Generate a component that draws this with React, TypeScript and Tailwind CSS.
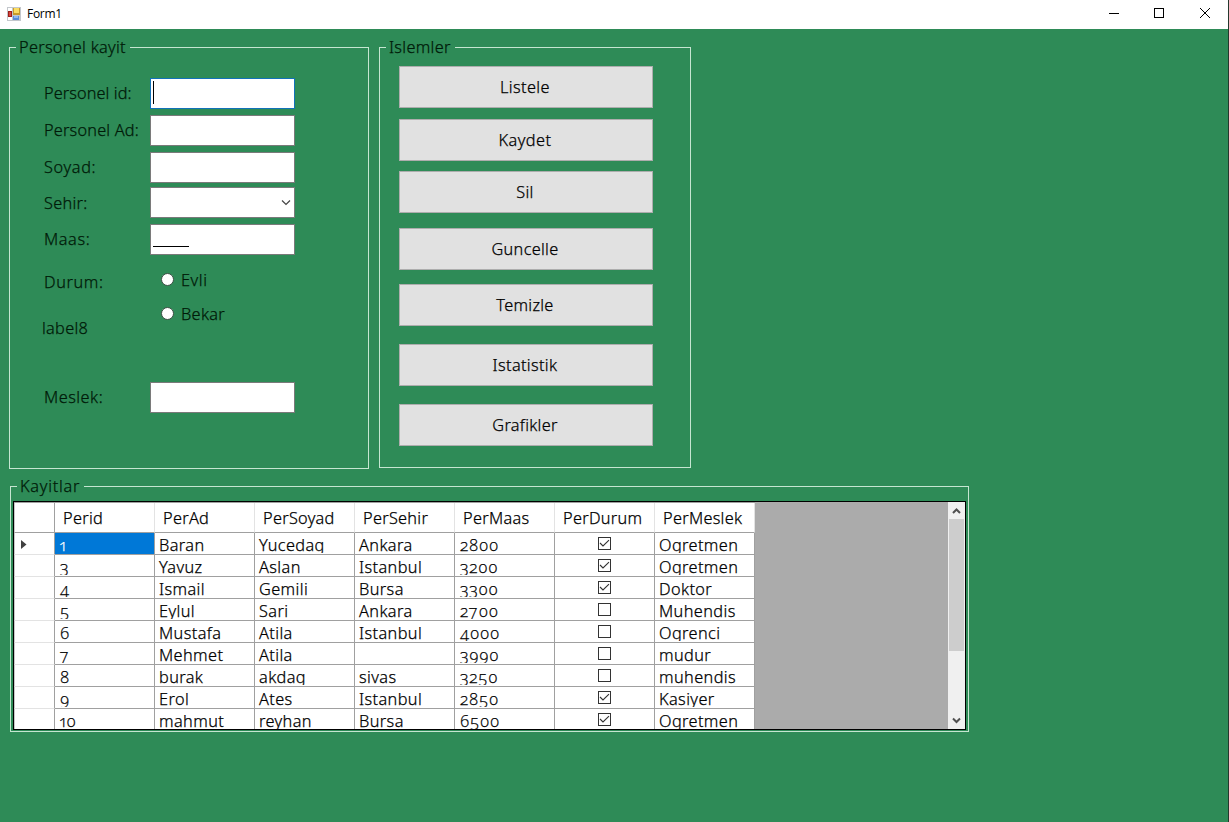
import React from 'react';

const buttons = [
  { label: 'Listele', gap: 'mt-0 tracking-[0.4px]' },
  { label: 'Kaydet', gap: 'mt-[11px] tracking-[0.45px]' },
  { label: 'Sil', gap: 'mt-[10px]' },
  { label: 'Guncelle', gap: 'mt-[15px]' },
  { label: 'Temizle', gap: 'mt-[14px]' },
  { label: 'Istatistik', gap: 'mt-[18px] tracking-[0.35px]' },
  { label: 'Grafikler', gap: 'mt-[18px]' },
];

const columns = ['Perid', 'PerAd', 'PerSoyad', 'PerSehir', 'PerMaas', 'PerDurum', 'PerMeslek'];

type Row = [string, string, string, string, string, boolean, string];
const rows: Row[] = [
  ['1', 'Baran', 'Yucedag', 'Ankara', '2800', true, 'Ogretmen'],
  ['3', 'Yavuz', 'Aslan', 'Istanbul', '3200', true, 'Ogretmen'],
  ['4', 'Ismail', 'Gemili', 'Bursa', '3300', true, 'Doktor'],
  ['5', 'Eylul', 'Sari', 'Ankara', '2700', false, 'Muhendis'],
  ['6', 'Mustafa', 'Atila', 'Istanbul', '4000', false, 'Ogrenci'],
  ['7', 'Mehmet', 'Atila', '', '3990', false, 'mudur'],
  ['8', 'burak', 'akdag', 'sivas', '3250', false, 'muhendis'],
  ['9', 'Erol', 'Ates', 'Istanbul', '2850', true, 'Kasiyer'],
  ['10', 'mahmut', 'reyhan', 'Bursa', '6500', true, 'Ogretmen'],
];

function FormIcon() {
  return (
    <svg className="mb-[2px]" width="14" height="14" viewBox="0 0 14 14" shapeRendering="crispEdges">
      <rect x="0" y="0" width="14" height="14" fill="#c3c7cc" />
      <rect x="1" y="1" width="4" height="3" fill="#fff" />
      <rect x="1" y="10" width="4" height="3" fill="#fff" />
      <rect x="6" y="1" width="7" height="7" fill="#c99a2a" />
      <rect x="7" y="1" width="5" height="5" fill="#fbdc62" />
      <rect x="1" y="4" width="4" height="6" fill="#9d1f1a" />
      <rect x="2" y="5" width="2" height="4" fill="#d8453a" />
      <rect x="6" y="9" width="6" height="4" fill="#5a8bd8" />
      <rect x="7" y="9" width="4" height="2" fill="#8fb8f0" />
    </svg>
  );
}

function TitleBar() {
  return (
    <header className="flex h-[29px] shrink-0 items-center bg-white pl-[7px] [-webkit-text-stroke:0px]">
      <FormIcon />
      <span className="mb-[2px] ml-[6px] grow font-['Open_Sans',sans-serif] text-[12px] font-normal leading-[16px] tracking-[-0.3px] text-black">
        Form1
      </span>
      <svg width="120" height="29" viewBox="0 0 120 29" fill="none" stroke="#000" shapeRendering="crispEdges">
        <path d="M1 13.5h10" />
        <rect x="46.5" y="8.5" width="9" height="9" />
        <path d="M92 8l10 10M102 8l-10 10" shapeRendering="auto" />
      </svg>
    </header>
  );
}

function Group({ title, className, children }: { title: string; className: string; children: React.ReactNode }) {
  return (
    <fieldset className={`min-w-0 border border-[#c5e6d1] ${className}`}>
      <legend className="ml-[6px] h-[22px] pl-[3px] pr-[4px] leading-[22px] text-[#001a08]">{title}</legend>
      {children}
    </fieldset>
  );
}

function FormRow({ label, className, children }: { label: string; className: string; children?: React.ReactNode }) {
  return (
    <div className={`flex h-[31px] items-center pl-[34px] ${className}`}>
      <label className="mb-[2px] w-[106px] shrink-0 whitespace-nowrap text-[#001a08]">{label}</label>
      {children}
    </div>
  );
}

function Box({ focused, children }: { focused?: boolean; children?: React.ReactNode }) {
  return (
    <div className={`flex h-[31px] w-[145px] border bg-white ${focused ? 'border-[#1272b8]' : 'border-[#7a7a7a]'}`}>
      {children}
    </div>
  );
}

function Radio({ label, className }: { label: string; className: string }) {
  return (
    <div className={`flex h-[22px] items-center ${className}`}>
      <span className="mb-[2px] h-[13px] w-[13px] rounded-full border border-[#3c4f44] bg-white" />
      <span className="ml-[7px] text-[#001a08]">{label}</span>
    </div>
  );
}

function CheckBox({ checked }: { checked: boolean }) {
  return (
    <svg width="13" height="13" viewBox="0 0 13 13" fill="none" stroke="#333">
      <rect x="0.5" y="0.5" width="12" height="12" fill="#fff" />
      {checked && <path d="M2 6l3 3L11 3.2" strokeWidth="1.1" />}
    </svg>
  );
}

function Cell({ value, selected, last }: { value: string | boolean; selected: boolean; last: boolean }) {
  if (typeof value === 'boolean') {
    return (
      <div className="flex justify-center border-b border-r border-[#a0a0a0] bg-white pt-[4px]">
        <CheckBox checked={value} />
      </div>
    );
  }
  const numeric = /^\d+$/.test(value);
  return (
    <div
      className={`overflow-hidden whitespace-nowrap border-b border-r border-[#a0a0a0] leading-[22px] ${
        selected ? 'bg-[#0078d7] text-white' : 'bg-white text-black'
      }`}
    >
      <div
        className={`overflow-hidden pt-px ${last ? 'h-[21px]' : 'h-[20px]'} ${
          numeric
            ? "pl-[5px] font-['Open_Sans','Lato',sans-serif] tracking-[0.7px] [font-feature-settings:'onum','pnum']"
            : 'pl-[4px]'
        }`}
      >
        {value}
      </div>
    </div>
  );
}

function DataGrid() {
  return (
    <div className="ml-[2px] mt-[4px] flex h-[229px] w-[953px] overflow-hidden border border-black bg-[#ababab] tracking-[0.4px]">
      <div className="w-[741px] shrink-0">
        <div className="grid h-[31px] grid-cols-[41px_repeat(7,100px)] border-t border-[#a0a0a0] bg-white">
          <div className="border-b border-l border-r border-[#a0a0a0] border-l-[#c8c8c8]" />
          {columns.map((c) => (
            <div
              key={c}
              className="whitespace-nowrap border-b border-r border-b-[#a0a0a0] border-r-[#e3e3e3] pl-[8px] pt-px leading-[28px] tracking-[0.3px] text-black"
            >
              {c}
            </div>
          ))}
        </div>
        {rows.map((r, i) => (
          <div key={r[0]} className="grid h-[22px] grid-cols-[41px_repeat(7,100px)]">
            <div className="flex items-center border-b border-l border-r border-b-[#e3e3e3] border-l-[#c8c8c8] border-r-[#a0a0a0] bg-white pl-[6px] pt-px">
              {i === 0 && (
                <svg width="6" height="9" viewBox="0 0 6 9">
                  <path d="M0 0v9l5.5-4.5z" fill="#404040" />
                </svg>
              )}
            </div>
            {r.map((v, j) => (
              <Cell key={j} value={v} selected={i === 0 && j === 0} last={i === rows.length - 1} />
            ))}
          </div>
        ))}
      </div>
      <div className="grow" />
      <div className="flex w-[17px] flex-col items-center bg-[#f0f0f0]">
        <svg width="17" height="17" viewBox="0 0 17 17" fill="none" stroke="#505050" strokeWidth="2">
          <path d="M5 11l3.5-3.5L12 11" />
        </svg>
        <div className="h-[132px] w-[15px] bg-[#cdcdcd]" />
        <div className="grow" />
        <svg width="17" height="17" viewBox="0 0 17 17" fill="none" stroke="#505050" strokeWidth="2">
          <path d="M5 6.5l3.5 3.5 3.5-3.5" />
        </svg>
      </div>
    </div>
  );
}

export default function App() {
  return (
    <div className="flex h-[822px] w-[1229px] flex-col overflow-hidden border-r border-[#24382d] bg-[#2e8b57] font-['Noto_Sans',sans-serif] text-[16.3px] font-light leading-[22px] tracking-[0.3px] [-webkit-text-stroke:0.25px]">
      <TitleBar />
      <main className="flex flex-col pt-[7px]">
        <div className="flex items-start pl-[9px]">
          <Group title="Personel kayit" className="h-[433px] w-[360px]">
            <FormRow label="Personel id:" className="mt-[20px] tracking-[0.1px]">
              <Box focused>
                <span className="ml-[2px] mt-[2px] h-[23px] w-px bg-black" />
              </Box>
            </FormRow>
            <FormRow label="Personel Ad:" className="mt-[6px] tracking-[0.2px]">
              <Box />
            </FormRow>
            <FormRow label="Soyad:" className="mt-[6px] tracking-[0.65px]">
              <Box />
            </FormRow>
            <FormRow label="Sehir:" className="mt-[4px] [&>label]:mb-0">
              <Box>
                <svg className="ml-auto mr-[3px] mt-[12px]" width="10" height="6" viewBox="0 0 10 6" fill="none" stroke="#444">
                  <path d="M1 0.5l4 4 4-4" strokeWidth="1.2" />
                </svg>
              </Box>
            </FormRow>
            <FormRow label="Maas:" className="mt-[6px] tracking-[0.6px]">
              <Box>
                <span className="ml-[2px] mt-[21px] h-px w-[36px] bg-black" />
              </Box>
            </FormRow>
            <div className="flex h-[84px] pl-[32px] pt-[14px]">
              <div className="flex w-[119px] flex-col text-[#001a08]">
                <span className="ml-[2px] mt-[2px] tracking-[0.6px]">Durum:</span>
                <span className="mt-[24px]">label8</span>
              </div>
              <div className="flex flex-col">
                <Radio label="Evli" className="tracking-[0.6px]" />
                <Radio label="Bekar" className="mt-[12px]" />
              </div>
            </div>
            <FormRow label="Meslek:" className="mt-[43px] tracking-[0.5px]">
              <Box />
            </FormRow>
          </Group>
          <Group title="Islemler" className="ml-[10px] h-[432px] w-[312px]">
            <div className="flex flex-col pl-[19px] pt-[8px]">
              {buttons.map((b) => (
                <button
                  key={b.label}
                  className={`h-[42px] w-[254px] border border-[#adadad] bg-[#e1e1e1] pr-[2px] text-center text-black ${b.gap}`}
                >
                  {b.label}
                </button>
              ))}
            </div>
          </Group>
        </div>
        <Group title="Kayitlar" className="ml-[10px] mt-[6px] h-[257px] w-[959px] tracking-[0.75px]">
          <DataGrid />
        </Group>
      </main>
    </div>
  );
}
